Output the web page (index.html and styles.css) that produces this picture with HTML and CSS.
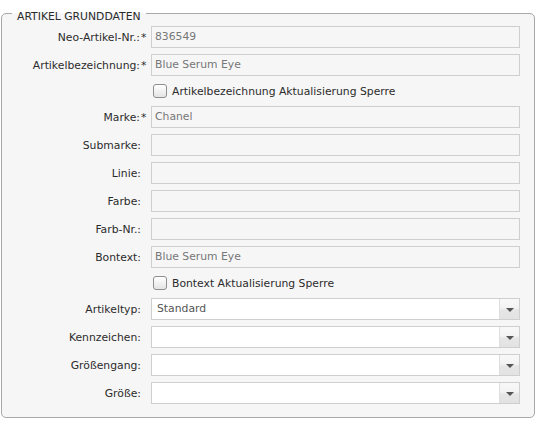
FILE: index.html
```html
<!DOCTYPE html>
<html lang="de">
<head>
<meta charset="utf-8">
<title>Artikel Grunddaten</title>
<link rel="stylesheet" href="styles.css">
</head>
<body>
<fieldset class="panel">
  <legend class="panel-title">ARTIKEL GRUNDDATEN</legend>
  <div class="form">
    <div class="row"><label class="lbl">Neo-Artikel-Nr.:<span class="req">*</span></label><div class="field ro">836549</div></div>
    <div class="row"><label class="lbl">Artikelbezeichnung:<span class="req">*</span></label><div class="field ro">Blue Serum Eye</div></div>
    <div class="row check-row"><span class="cb"></span><span class="cb-text">Artikelbezeichnung Aktualisierung Sperre</span></div>
    <div class="row"><label class="lbl">Marke:<span class="req">*</span></label><div class="field ro">Chanel</div></div>
    <div class="row"><label class="lbl">Submarke:</label><div class="field ro"></div></div>
    <div class="row"><label class="lbl">Linie:</label><div class="field ro"></div></div>
    <div class="row"><label class="lbl">Farbe:</label><div class="field ro"></div></div>
    <div class="row"><label class="lbl">Farb-Nr.:</label><div class="field ro"></div></div>
    <div class="row"><label class="lbl">Bontext:</label><div class="field ro">Blue Serum Eye</div></div>
    <div class="row check-row"><span class="cb"></span><span class="cb-text">Bontext Aktualisierung Sperre</span></div>
    <div class="row"><label class="lbl">Artikeltyp:</label><div class="field combo"><span class="combo-val">Standard</span><span class="trigger"><span class="arrow"></span></span></div></div>
    <div class="row"><label class="lbl">Kennzeichen:</label><div class="field combo"><span class="combo-val"></span><span class="trigger"><span class="arrow"></span></span></div></div>
    <div class="row"><label class="lbl">Größengang:</label><div class="field combo"><span class="combo-val"></span><span class="trigger"><span class="arrow"></span></span></div></div>
    <div class="row"><label class="lbl">Größe:</label><div class="field combo"><span class="combo-val"></span><span class="trigger"><span class="arrow"></span></span></div></div>
  </div>
</fieldset>
</body>
</html>
```
FILE: styles.css
```css
html, body {
  margin: 0;
  padding: 0;
  background: #ffffff;
}
body {
  font-family: "DejaVu Sans", Verdana, sans-serif;
  font-size: 10.8px;
  color: #2b2b2b;
}
.panel {
  box-sizing: border-box;
  width: 534px;
  height: 418px;
  margin: 0 0 0 1px;
  padding: 0 13px 13px 0;
  border: 1px solid #a9a9a9;
  border-radius: 5px;
  background: #f6f6f6;
}
.panel-title {
  margin-left: 10px;
  padding: 10px 5px 3px 5px;
  line-height: 13px;
  color: #2b2b2b;
}
.form {
  display: flex;
  flex-direction: column;
  gap: 6px;
}
.row {
  display: flex;
  align-items: center;
  height: 22px;
}
.lbl {
  width: 139px;
  margin-right: 10px;
  text-align: right;
  white-space: nowrap;
  color: #2b2b2b;
}
.req {
  display: inline-block;
  width: 0;
  overflow: visible;
  white-space: nowrap;
  margin-left: 1px;
}
.field {
  box-sizing: border-box;
  width: 369px;
  height: 22px;
  border: 1px solid #cfcfcf;
  padding: 0 0 0 3px;
  line-height: 20px;
  white-space: nowrap;
  overflow: hidden;
}
.ro {
  background: #f6f6f6;
  color: #777777;
}
.combo {
  display: flex;
  background: #ffffff;
  color: #555555;
  padding-left: 0;
}
.combo-val {
  flex: 1;
  padding-left: 5px;
}
.trigger {
  box-sizing: border-box;
  width: 20px;
  height: 20px;
  border-left: 1px solid #dddddd;
  background: linear-gradient(#f8f8f8 0%, #f3f3f3 45%, #e6e6e6 55%, #e2e2e2 100%);
  display: flex;
  align-items: center;
  justify-content: center;
}
.arrow {
  width: 0;
  height: 0;
  border-left: 4px solid transparent;
  border-right: 4px solid transparent;
  border-top: 4px solid #555555;
  margin-top: 1px;
}
.check-row {
  height: 18px;
  padding-left: 151px;
}
.cb {
  box-sizing: border-box;
  width: 14px;
  height: 14px;
  border: 1px solid #8f8f8f;
  border-radius: 3px;
  background: linear-gradient(#ffffff, #e4e4e4);
}
.cb-text {
  margin-left: 5px;
  color: #2b2b2b;
  white-space: nowrap;
}
```
